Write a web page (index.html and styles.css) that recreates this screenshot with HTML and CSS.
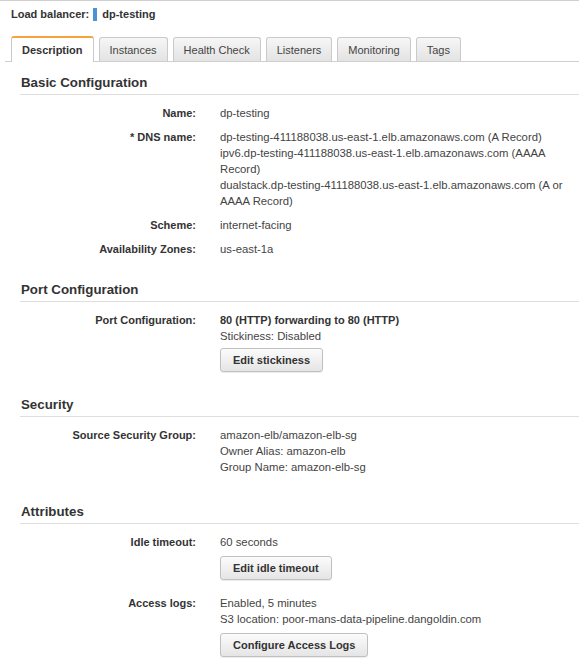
FILE: index.html
```html
<!DOCTYPE html>
<html>
<head>
<meta charset="utf-8">
<link rel="stylesheet" href="styles.css">
</head>
<body>
<div class="page">
  <div class="title">
    <span class="title-label">Load balancer:</span>
    <span class="title-bar"></span>
    <span class="title-name">dp-testing</span>
  </div>
  <div class="tabs">
    <div class="tab active">Description</div>
    <div class="tab">Instances</div>
    <div class="tab">Health Check</div>
    <div class="tab">Listeners</div>
    <div class="tab">Monitoring</div>
    <div class="tab">Tags</div>
  </div>

  <div class="section first">
    <div class="section-title">Basic Configuration</div>
    <div class="rows">
      <div class="row">
        <div class="label">Name:</div>
        <div class="value">dp-testing</div>
      </div>
      <div class="row">
        <div class="label">* DNS name:</div>
        <div class="value">
          <div>dp-testing-411188038.us-east-1.elb.amazonaws.com (A Record)</div>
          <div>ipv6.dp-testing-411188038.us-east-1.elb.amazonaws.com (AAAA Record)</div>
          <div>dualstack.dp-testing-411188038.us-east-1.elb.amazonaws.com (A or AAAA Record)</div>
        </div>
      </div>
      <div class="row">
        <div class="label">Scheme:</div>
        <div class="value">internet-facing</div>
      </div>
      <div class="row">
        <div class="label">Availability Zones:</div>
        <div class="value">us-east-1a</div>
      </div>
    </div>
  </div>

  <div class="section">
    <div class="section-title">Port Configuration</div>
    <div class="rows">
      <div class="row">
        <div class="label">Port Configuration:</div>
        <div class="value">
          <div class="strong">80 (HTTP) forwarding to 80 (HTTP)</div>
          <div>Stickiness: Disabled</div>
          <button class="btn">Edit stickiness</button>
        </div>
      </div>
    </div>
  </div>

  <div class="section">
    <div class="section-title">Security</div>
    <div class="rows">
      <div class="row">
        <div class="label">Source Security Group:</div>
        <div class="value">
          <div>amazon-elb/amazon-elb-sg</div>
          <div>Owner Alias: amazon-elb</div>
          <div>Group Name: amazon-elb-sg</div>
        </div>
      </div>
    </div>
  </div>

  <div class="section attrs">
    <div class="section-title">Attributes</div>
    <div class="rows">
      <div class="row with-btn">
        <div class="label">Idle timeout:</div>
        <div class="value">
          <div>60 seconds</div>
          <button class="btn">Edit idle timeout</button>
        </div>
      </div>
      <div class="row">
        <div class="label">Access logs:</div>
        <div class="value">
          <div>Enabled, 5 minutes</div>
          <div>S3 location: poor-mans-data-pipeline.dangoldin.com</div>
          <button class="btn">Configure Access Logs</button>
        </div>
      </div>
    </div>
  </div>
</div>
</body>
</html>
```

FILE: styles.css
```css
html, body {
  margin: 0;
  padding: 0;
  background: #fff;
}

body {
  font-family: "Liberation Sans", Arial, Helvetica, sans-serif;
  font-size: 11.3px;
  color: #444;
}

.page {
  border-top: 1px solid #d0d0d0;
  width: 579px;
  height: 667px;
  overflow: hidden;
}

.title {
  display: flex;
  align-items: center;
  padding: 5px 0 0 11px;
  height: 16px;
  font-weight: bold;
  font-size: 11px;
  color: #333;
}

.title-bar {
  display: inline-block;
  width: 4px;
  height: 13px;
  background: #4d93d4;
  margin: 0 5px 0 4px;
}

.tabs {
  display: flex;
  align-items: flex-end;
  gap: 5px;
  margin: 14px 0 0 5px;
  padding-left: 6px;
  border-bottom: 1px solid #cfcfcf;
  height: 25px;
}

.tab {
  height: 23px;
  line-height: 25px;
  padding: 0 10px;
  border: 1px solid #cacaca;
  border-bottom: none;
  border-radius: 3px 3px 0 0;
  background: linear-gradient(#f6f6f6, #e3e3e3);
  color: #444;
  font-size: 11px;
}

.tab.active {
  height: 24px;
  line-height: 25px;
  margin-bottom: -1px;
  border-top: 2px solid #f5a33a;
  background: #fff;
  font-weight: bold;
  color: #333;
}

.section {
  margin: 25px 0 0 20px;
}

.section.first {
  margin-top: 13px;
}

.section.attrs {
  margin-top: 29px;
}

.section-title {
  font-size: 13.3px;
  font-weight: bold;
  color: #333;
  line-height: 16px;
  padding: 0 0 3px 1px;
  border-bottom: 1px solid #dedede;
}

.rows {
  display: flex;
  flex-direction: column;
  gap: 8px;
  padding-top: 10px;
}

.row {
  display: flex;
  line-height: 16px;
}

.row.with-btn {
  margin-bottom: 7px;
}

.label {
  width: 176px;
  flex: none;
  text-align: right;
  font-weight: bold;
  font-size: 11px;
  color: #333;
}

.value {
  margin-left: 24px;
  width: 352px;
}

.strong {
  font-weight: bold;
  color: #333;
  font-size: 11px;
}

.btn {
  display: block;
  margin-top: 4px;
  height: 24px;
  padding: 0 12px;
  font-family: "Liberation Sans", Arial, Helvetica, sans-serif;
  font-size: 11px;
  font-weight: bold;
  color: #333;
  border: 1px solid #c0c0c0;
  border-radius: 3px;
  background: linear-gradient(#fbfbfb, #e5e5e5);
  box-shadow: 0 1px 1px rgba(0, 0, 0, 0.08);
}

.attrs .btn {
  margin-top: 6px;
}
```
